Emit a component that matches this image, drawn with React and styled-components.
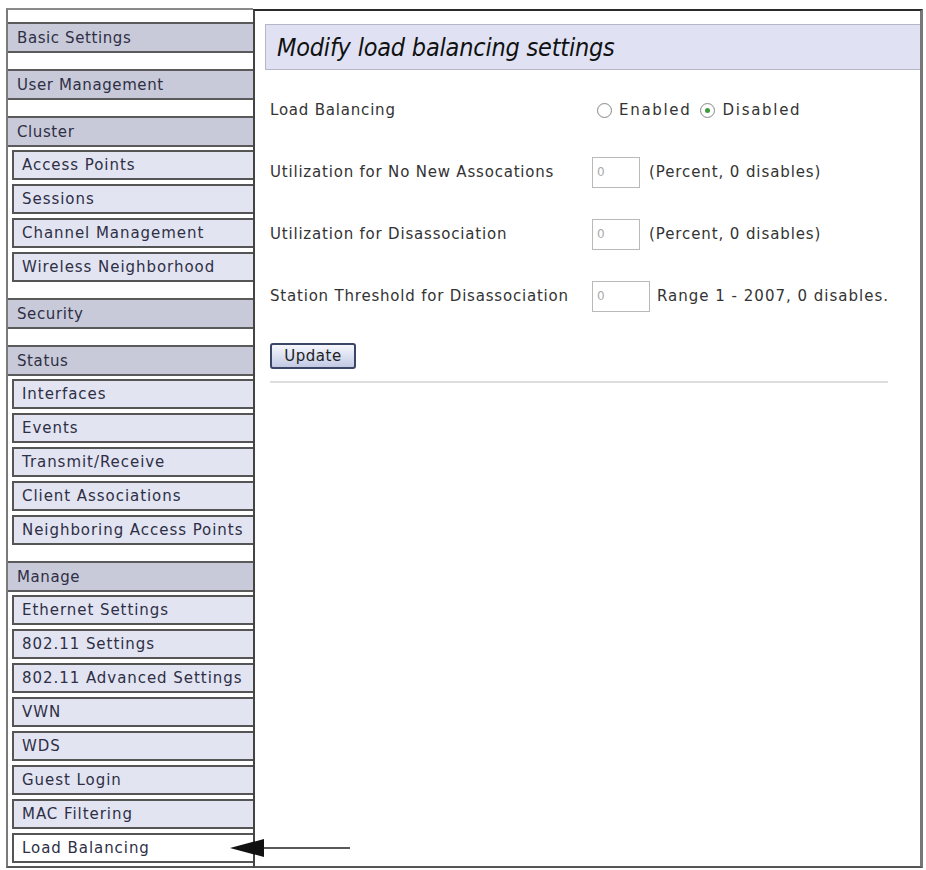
import React from "react";
import styled, { createGlobalStyle } from "styled-components";

const Global = createGlobalStyle`
  html, body { margin: 0; padding: 0; background: #fff; }
  body { font-family: "DejaVu Sans", Verdana, sans-serif; color: #333; }
  * { box-sizing: border-box; }
`;

const Frame = styled.div`
  position: relative;
  display: flex;
  width: 917px;
  height: 860px;
  margin: 8px 0 0 6px;
`;

const Sidebar = styled.nav`
  width: 247px;
  flex: none;
  display: flex;
  flex-direction: column;
  border-left: 2px solid #7a7a7a;
  border-top: 2px solid #8a8a8a;
  border-bottom: 2px solid #555;
  padding-top: 12px;
`;

const Header = styled.div`
  height: 31px;
  flex: none;
  display: flex;
  align-items: center;
  padding-left: 9px;
  background: #c9cad9;
  border-top: 2px solid #5a5a5a;
  border-bottom: 2px solid #5a5a5a;
  font-size: 15px;
  letter-spacing: 0.6px;
  color: #2e2f45;
  margin-bottom: ${(p) => (p.$alone ? "16px" : "0")};
`;

const Items = styled.div`
  display: flex;
  flex-direction: column;
  gap: 4px;
  padding: 3px 0 0 4px;
  margin-bottom: ${(p) => (p.$last ? "0" : "16px")};
`;

const Item = styled.a`
  height: 30px;
  display: flex;
  align-items: center;
  padding-left: 8px;
  border: 2px solid #555;
  border-right: none;
  background: ${(p) => (p.$active ? "#fff" : "#e2e4f2")};
  font-size: 15px;
  letter-spacing: 0.95px;
  color: #2e2f45;
  white-space: nowrap;
  overflow: hidden;
  text-decoration: none;
`;

const Main = styled.main`
  flex: 1;
  margin-top: 1px;
  border-top: 2px solid #2a2a2a;
  border-left: 2px solid #444;
  border-right: 3px solid #777;
  border-bottom: 2px solid #555;
  padding: 13px 0 0 10px;
`;

const TitleBar = styled.h1`
  margin: 0;
  height: 46px;
  display: flex;
  align-items: center;
  padding-left: 11px;
  background: #e0e2f3;
  border: 1px solid #b5b6c6;
  border-right: none;
  font-family: "DejaVu Sans Condensed", "DejaVu Sans", sans-serif;
  font-style: italic;
  font-weight: normal;
  font-size: 25px;
  letter-spacing: -0.2px;
  color: #111;
`;

const Form = styled.form`
  padding: 9px 0 0 5px;
  width: 623px;
`;

const Row = styled.div`
  height: 62px;
  display: grid;
  grid-template-columns: 322px auto;
  align-items: center;
  font-size: 15px;
  letter-spacing: 0.8px;
  color: #333;
`;

const Label = styled.span`
  white-space: nowrap;
`;

const Field = styled.div`
  display: flex;
  align-items: center;
  gap: ${(p) => p.$gap || "9px"};
  white-space: nowrap;
`;

const RadioGroup = styled.div`
  display: flex;
  align-items: center;
  padding-left: 5px;
  font-size: 15px;
  letter-spacing: 1.7px;
`;

const Radio = styled.span`
  width: 15px;
  height: 15px;
  border-radius: 50%;
  border: 1px solid #8a8a8a;
  background: radial-gradient(circle, #fff 55%, #e6e6e6 100%);
  display: inline-flex;
  align-items: center;
  justify-content: center;
  margin: ${(p) => (p.$second ? "0 8px 0 8px" : "0 7px 0 0")};
  &::after {
    content: "";
    width: 5px;
    height: 5px;
    border-radius: 50%;
    background: ${(p) => (p.$checked ? "#3c9a3c" : "transparent")};
  }
`;

const TextInput = styled.input`
  width: ${(p) => p.$w || "48px"};
  height: 31px;
  border: 1px solid #b9b9b9;
  padding: 0 0 0 4px;
  font-family: "DejaVu Sans", sans-serif;
  font-size: 12px;
  color: #aaa;
  background: #fff;
`;

const Note = styled.span`
  font-size: 15px;
  letter-spacing: ${(p) => p.$spacing || "0.9px"};
  color: #333;
`;

const UpdateButton = styled.button`
  margin-top: 16px;
  width: 86px;
  height: 26px;
  border: 2px solid #3b4566;
  border-radius: 3px;
  background: linear-gradient(#f6f7fc, #d6dcef 60%, #c2c9e3);
  font-family: "DejaVu Sans", sans-serif;
  font-size: 15px;
  letter-spacing: 0.5px;
  color: #222;
  padding: 0;
`;

const Rule = styled.hr`
  margin: 12px 0 0 0;
  width: 618px;
  height: 2px;
  border: none;
  background: #ddd;
`;

const Pointer = styled.svg`
  position: absolute;
  left: 224px;
  top: 830px;
`;

const groups = [
  { title: "Basic Settings" },
  { title: "User Management" },
  {
    title: "Cluster",
    items: ["Access Points", "Sessions", "Channel Management", "Wireless Neighborhood"],
  },
  { title: "Security" },
  {
    title: "Status",
    items: ["Interfaces", "Events", "Transmit/Receive", "Client Associations", "Neighboring Access Points"],
  },
  {
    title: "Manage",
    items: [
      "Ethernet Settings",
      "802.11 Settings",
      "802.11 Advanced Settings",
      "VWN",
      "WDS",
      "Guest Login",
      "MAC Filtering",
      "Load Balancing",
    ],
  },
];

export default function App() {
  return (
    <>
      <Global />
      <Frame>
        <Sidebar>
          {groups.map((g, gi) => (
            <React.Fragment key={g.title}>
              <Header $alone={!g.items}>{g.title}</Header>
              {g.items && (
                <Items $last={gi === groups.length - 1}>
                  {g.items.map((it) => (
                    <Item key={it} $active={it === "Load Balancing"}>
                      {it}
                    </Item>
                  ))}
                </Items>
              )}
            </React.Fragment>
          ))}
        </Sidebar>
        <Main>
          <TitleBar>Modify load balancing settings</TitleBar>
          <Form onSubmit={(e) => e.preventDefault()}>
            <Row>
              <Label>Load Balancing</Label>
              <RadioGroup>
                <Radio />
                Enabled
                <Radio $second $checked />
                Disabled
              </RadioGroup>
            </Row>
            <Row>
              <Label>Utilization for No New Assocations</Label>
              <Field>
                <TextInput defaultValue="0" />
                <Note>(Percent, 0 disables)</Note>
              </Field>
            </Row>
            <Row>
              <Label>Utilization for Disassociation</Label>
              <Field>
                <TextInput defaultValue="0" />
                <Note>(Percent, 0 disables)</Note>
              </Field>
            </Row>
            <Row>
              <Label>Station Threshold for Disassociation</Label>
              <Field $gap="7px">
                <TextInput $w="58px" defaultValue="0" />
                <Note $spacing="1px">Range 1 - 2007, 0 disables.</Note>
              </Field>
            </Row>
            <UpdateButton type="submit">Update</UpdateButton>
            <Rule />
          </Form>
        </Main>
        <Pointer width="122" height="20" viewBox="0 0 122 20">
          <polygon points="0,10 34,1 34,19" fill="#111" />
          <line x1="34" y1="10" x2="120" y2="10" stroke="#222" strokeWidth="1.6" />
        </Pointer>
      </Frame>
    </>
  );
}
